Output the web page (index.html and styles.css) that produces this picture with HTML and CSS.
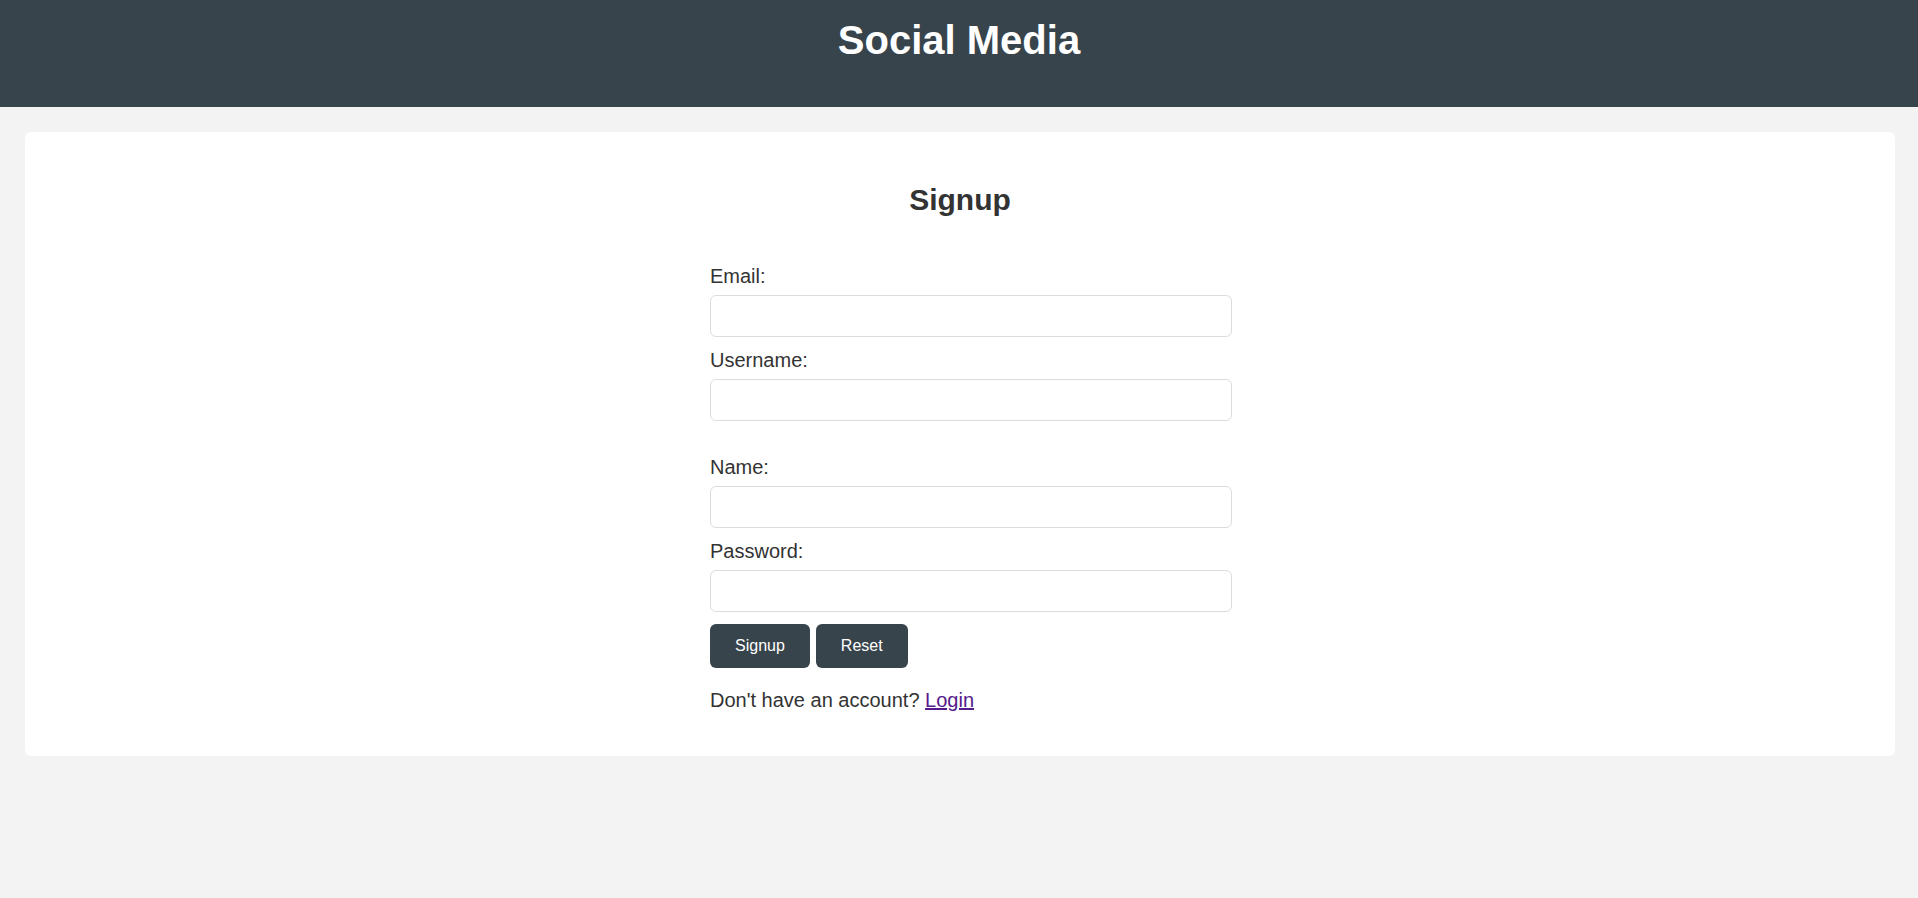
FILE: index.html
```html
<!DOCTYPE html>
<html lang="en">
<head>
<meta charset="utf-8">
<title>Social Media</title>
<link rel="stylesheet" href="styles.css">
</head>
<body>
<header class="site-header">
  <h1 class="site-title">Social Media</h1>
</header>
<main class="page">
  <section class="card">
    <h2 class="card-title">Signup</h2>
    <form class="signup-form">
      <label class="field-label" for="email">Email:</label>
      <input class="field-input" id="email" type="email">
      <label class="field-label" for="username">Username:</label>
      <input class="field-input" id="username" type="text">
      <div class="spacer"></div>
      <label class="field-label" for="name">Name:</label>
      <input class="field-input" id="name" type="text">
      <label class="field-label" for="password">Password:</label>
      <input class="field-input" id="password" type="password">
      <div class="actions">
        <button class="btn" type="submit">Signup</button>
        <button class="btn" type="reset">Reset</button>
      </div>
      <p class="switch">Don't have an account? <a class="switch-link" href="#">Login</a></p>
    </form>
  </section>
</main>
</body>
</html>
```

FILE: styles.css
```css
html, body {
  margin: 0;
  padding: 0;
}

body {
  background: #f3f3f3;
  font-family: "Liberation Sans", Arial, sans-serif;
  color: #333333;
  font-size: 20px;
}

.site-header {
  background: #37444c;
  padding: 16.5px 0 44.5px;
  text-align: center;
}

.site-title {
  margin: 0;
  color: #ffffff;
  font-size: 40px;
  font-weight: bold;
  line-height: 46px;
}

.page {
  padding: 25px 23px 0 25px;
}

.card {
  background: #ffffff;
  border-radius: 6px;
  padding: 25px 25px 24px;
  display: flex;
  flex-direction: column;
  align-items: center;
}

.card-title {
  margin: 26px 0 0;
  font-size: 30px;
  font-weight: bold;
  line-height: 34.5px;
  color: #333333;
}

.signup-form {
  width: 500px;
  padding-top: 47px;
}

.field-label {
  display: block;
  font-size: 20px;
  line-height: 23px;
  margin-bottom: 7px;
}

.field-input {
  display: block;
  width: 100%;
  height: 40px;
  padding: 0 10px;
  margin: 0 0 12px;
  border: 1px solid #dcdcdc;
  border-radius: 6px;
  background: #ffffff;
  font-family: "Liberation Sans", Arial, sans-serif;
  font-size: 17px;
  outline: none;
}

.spacer {
  height: 23px;
}

.actions {
  display: flex;
  gap: 6px;
  margin-top: 1.5px;
}

.btn {
  background: #37444c;
  color: #ffffff;
  border: none;
  border-radius: 6px;
  padding: 0 25px;
  height: 44.5px;
  font-family: "Liberation Sans", Arial, sans-serif;
  font-size: 16px;
  line-height: normal;
  cursor: pointer;
}

.switch {
  margin: 21px 0 20px;
  font-size: 20px;
  line-height: 23px;
}

.switch-link {
  color: #551a8b;
  text-decoration: underline;
}
```
